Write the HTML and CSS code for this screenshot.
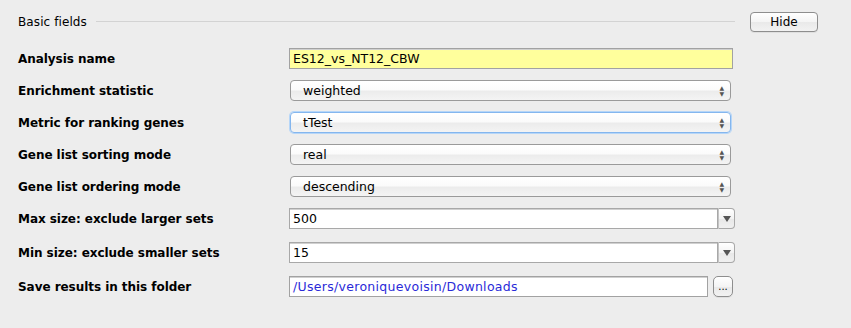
FILE: index.html
```html
<!DOCTYPE html>
<html lang="en">
<head>
    <meta charset="UTF-8">
    <title>Basic fields</title>
    <link rel="stylesheet" href="styles.css">
</head>
<body>
    <div class="panel">
        <div class="section-head">
            <div class="legend">
                <span class="legend-text">Basic fields</span>
                <span class="legend-line"></span>
            </div>
            <button class="btn hide-btn">Hide</button>
        </div>

        <div class="form">
            <div class="row">
                <div class="label">Analysis name</div>
                <div class="field text yellow">ES12_vs_NT12_CBW</div>
            </div>
            <div class="row">
                <div class="label">Enrichment statistic</div>
                <div class="field combo"><span>weighted</span><span class="arrows">&#9650;<br>&#9660;</span></div>
            </div>
            <div class="row">
                <div class="label">Metric for ranking genes</div>
                <div class="field combo focused"><span>tTest</span><span class="arrows">&#9650;<br>&#9660;</span></div>
            </div>
            <div class="row">
                <div class="label">Gene list sorting mode</div>
                <div class="field combo"><span>real</span><span class="arrows">&#9650;<br>&#9660;</span></div>
            </div>
            <div class="row">
                <div class="label">Gene list ordering mode</div>
                <div class="field combo"><span>descending</span><span class="arrows">&#9650;<br>&#9660;</span></div>
            </div>
            <div class="row tall">
                <div class="label">Max size: exclude larger sets</div>
                <div class="field editable">
                    <div class="edit-text">500</div>
                    <div class="drop-btn"><span class="tri"></span></div>
                </div>
            </div>
            <div class="row tall">
                <div class="label">Min size: exclude smaller sets</div>
                <div class="field editable">
                    <div class="edit-text">15</div>
                    <div class="drop-btn"><span class="tri"></span></div>
                </div>
            </div>
            <div class="row">
                <div class="label">Save results in this folder</div>
                <div class="folder">
                    <div class="field text path">/Users/veroniquevoisin/Downloads</div>
                    <button class="btn dots">...</button>
                </div>
            </div>
        </div>
    </div>
</body>
</html>
```

FILE: styles.css
```css
body { margin: 0; background: #ededed; font-family: "DejaVu Sans", "Lucida Grande", sans-serif; font-size: 12px; color: #000; }
.panel { width: 851px; height: 328px; padding: 11px 0 0 0; box-sizing: border-box; }

.section-head { display: flex; align-items: center; height: 21px; }
.legend { display: flex; align-items: center; width: 735px; padding-left: 18px; box-sizing: border-box; }
.legend-text { font-size: 12px; letter-spacing: 0.1px; }
.legend-line { flex: 1; height: 1px; background: #d3d3d3; margin-left: 9px; }

.btn { font-family: inherit; font-size: 12px; color: #000; border: 1px solid #8e8e8e; border-radius: 4px; background: linear-gradient(#ffffff, #f4f4f4 50%, #e9e9e9 51%, #f2f2f2); padding: 0; cursor: pointer; box-shadow: 0 1px 0 rgba(0,0,0,0.06); }
.hide-btn { width: 68px; height: 20px; margin-left: 15px; }

.form { padding: 16px 0 0 18px; }
.row { display: flex; align-items: center; height: 21px; margin-bottom: 11px; }
.row.tall { margin-bottom: 13px; }
.label { width: 271px; font-weight: bold; font-size: 12px; letter-spacing: -0.05px; padding-top: 1px; }

.field { box-sizing: border-box; height: 21px; display: flex; align-items: center; font-size: 12.5px; }
.text { width: 444px; border: 1px solid #a2a2a2; background: #fff; padding-left: 3px; box-shadow: inset 0 1px 0 #d0d0d0; }
.yellow { background: #ffff9c; }
.path { width: 419px; color: #2a2ad8; letter-spacing: 0.3px; }

.combo { width: 441px; margin-left: 1px; border: 1px solid #9a9a9a; border-radius: 4px; background: linear-gradient(#ffffff, #fbfbfb 45%, #ececec 55%, #f4f4f4); padding-left: 12px; justify-content: space-between; }
.combo.focused { border-color: #84b6ee; box-shadow: 0 0 0 1px #b6d6f8; }
.arrows { font-size: 6px; line-height: 6px; color: #555; padding-right: 6px; text-align: center; }

.editable { width: 446px; }
.edit-text { flex: 1; height: 21px; box-sizing: border-box; border: 1px solid #a8a8a8; background: #fff; padding-left: 3px; display: flex; align-items: center; box-shadow: inset 0 1px 0 #d0d0d0; }
.drop-btn { width: 17px; height: 21px; box-sizing: border-box; border: 1px solid #a8a8a8; border-left: 1px solid #c4c4c4; border-radius: 0 4px 4px 0; background: linear-gradient(#ffffff, #f3f3f3 50%, #e8e8e8 51%, #f0f0f0); display: flex; align-items: center; justify-content: center; }
.tri { width: 0; height: 0; border-left: 4px solid transparent; border-right: 4px solid transparent; border-top: 6px solid #555; }

.folder { display: flex; align-items: center; }
.dots { width: 20px; height: 21px; margin-left: 5px; font-size: 10px; line-height: 14px; border-radius: 5px; }
```
